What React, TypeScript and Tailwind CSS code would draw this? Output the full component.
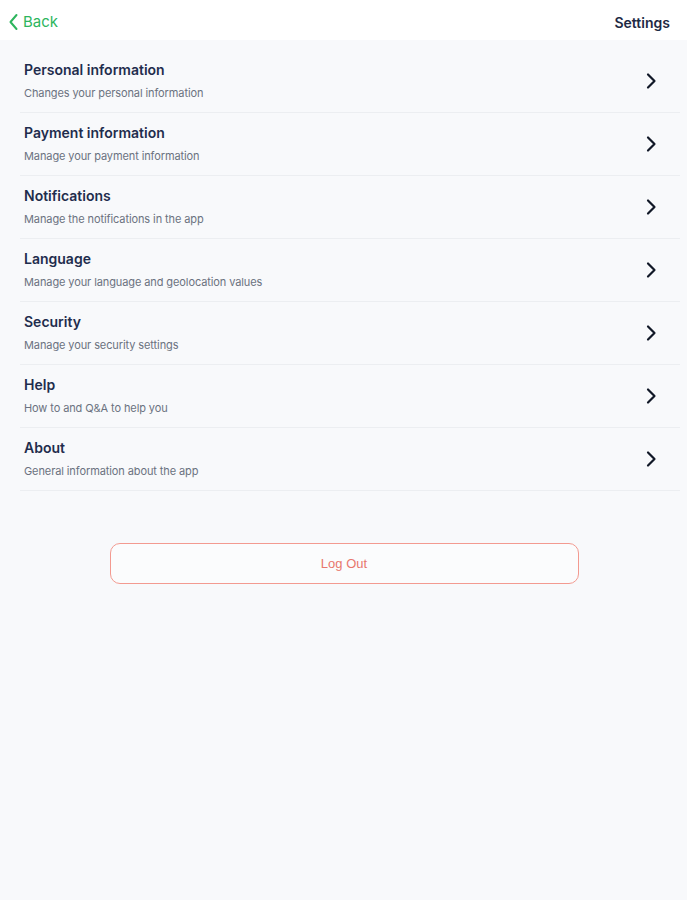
import React from "react";

const items = [
  { title: "Personal information", sub: "Changes your personal information" },
  { title: "Payment information", sub: "Manage your payment information" },
  { title: "Notifications", sub: "Manage the notifications in the app" },
  { title: "Language", sub: "Manage your language and geolocation values" },
  { title: "Security", sub: "Manage your security settings" },
  { title: "Help", sub: "How to and Q&A to help you" },
  { title: "About", sub: "General information about the app" },
];

function Chevron() {
  return (
    <svg width="12" height="18" viewBox="0 0 12 18" fill="none">
      <path d="M3 2.5 L9.5 9 L3 15.5" stroke="#111827" strokeWidth="2.2" strokeLinecap="round" strokeLinejoin="round" />
    </svg>
  );
}

export default function App() {
  return (
    <div className="w-[687px] h-[900px] bg-[#f8f9fb] font-['Inter',sans-serif]">
      <div className="h-[40px] bg-white flex items-center justify-between pt-[4px] pl-[8px] pr-[17px]">
        <div className="flex items-center gap-[4px] text-[#2db55d] text-[15px]">
          <svg width="11" height="18" viewBox="0 0 11 18" fill="none">
            <path d="M8.5 2 L2.5 9 L8.5 16" stroke="#2db55d" strokeWidth="2" strokeLinecap="round" strokeLinejoin="round" />
          </svg>
          <span>Back</span>
        </div>
        <span className="text-[#1e2a44] text-[14px] font-semibold">Settings</span>
      </div>
      <div className="pt-[10px] pl-[20px] pr-[7px]">
        {items.map((it) => (
          <div key={it.title} className="flex items-center justify-between border-b border-[#eceef1] pt-[10px] pb-[11px] pl-[4px] pr-[23px]">
            <div className="flex flex-col">
              <span className="text-[14px] leading-[20px] font-semibold text-[#1f2d4d]">{it.title}</span>
              <span className="mt-[5px] text-[11px] leading-[16px] tracking-[-0.1px] text-[#6b7280]">{it.sub}</span>
            </div>
            <Chevron />
          </div>
        ))}
      </div>
      <div className="flex justify-center mt-[52px]">
        <button className="w-[469px] h-[41px] ml-[1px] rounded-[10px] border-[1.5px] border-[#f39a90] bg-[#fbfcfd] text-[#e8776d] text-[13px] font-['Liberation_Sans',sans-serif]">
          Log Out
        </button>
      </div>
    </div>
  );
}
